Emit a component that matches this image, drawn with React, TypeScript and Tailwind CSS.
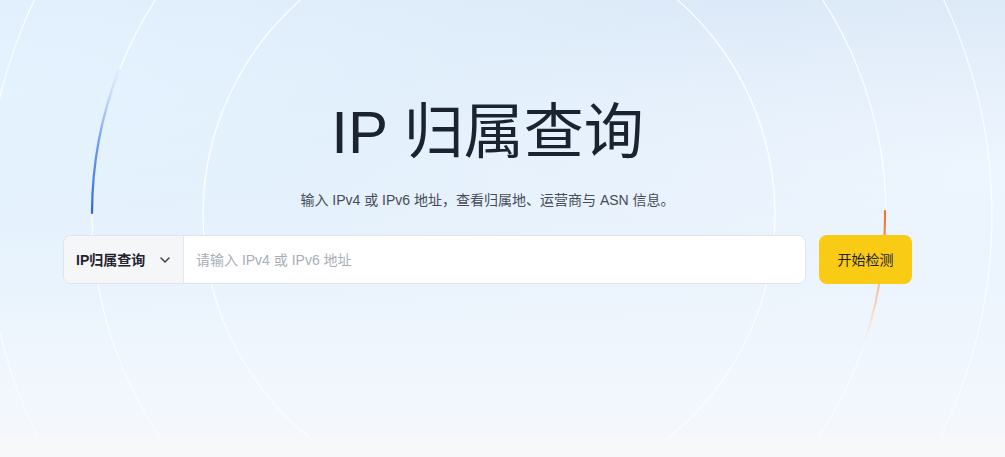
import { ChevronDown } from 'lucide-react';

const font = { fontFamily: '"Liberation Sans", "Noto Sans CJK SC", sans-serif' };

function Rings() {
  return (
    <svg
      className="pointer-events-none absolute inset-0"
      width="1005"
      height="437"
      viewBox="0 0 1005 437"
      fill="none"
    >
      <defs>
        <linearGradient id="blueArc" x1="0" y1="213" x2="0" y2="68" gradientUnits="userSpaceOnUse">
          <stop offset="0" stopColor="#2f64d6" />
          <stop offset="0.5" stopColor="#5b8de6" stopOpacity="0.85" />
          <stop offset="1" stopColor="#a9c4f3" stopOpacity="0.2" />
        </linearGradient>
        <linearGradient id="orangeArc" x1="0" y1="211" x2="0" y2="352" gradientUnits="userSpaceOnUse">
          <stop offset="0" stopColor="#f0732a" />
          <stop offset="0.4" stopColor="#f39a5f" stopOpacity="0.85" />
          <stop offset="1" stopColor="#f8c9a6" stopOpacity="0" />
        </linearGradient>
        <linearGradient id="ringFade" x1="0" y1="0" x2="0" y2="437" gradientUnits="userSpaceOnUse">
          <stop offset="0" stopColor="#ffffff" stopOpacity="0.95" />
          <stop offset="0.6" stopColor="#ffffff" stopOpacity="0.85" />
          <stop offset="1" stopColor="#ffffff" stopOpacity="0.55" />
        </linearGradient>
      </defs>
      <circle cx="489" cy="215" r="286" stroke="url(#ringFade)" strokeWidth="1.3" />
      <circle cx="489" cy="215" r="397" stroke="url(#ringFade)" strokeWidth="1.2" />
      <circle cx="489" cy="215" r="503" stroke="url(#ringFade)" strokeWidth="1.1" />
      {/* blue highlight on the left */}
      <path d="M119 70 A397 397 0 0 0 92 213" stroke="url(#blueArc)" strokeWidth="2.2" strokeLinecap="round" />
      {/* orange highlight on the right */}
      <path d="M885 211 A397 397 0 0 1 862 350" stroke="url(#orangeArc)" strokeWidth="2.2" strokeLinecap="round" />
    </svg>
  );
}

export default function App() {
  return (
    <div className="h-[457px] w-full overflow-hidden bg-[#f7f8fa]" style={font}>
      <section className="relative h-[437px] overflow-hidden bg-[linear-gradient(180deg,#dce9f8_0%,#e4effb_45%,#eef5fd_75%,#f4f8fd_100%)]">
        <div className="absolute inset-0 bg-[radial-gradient(ellipse_at_0%_20%,rgba(228,244,255,0.9),rgba(228,244,255,0)_55%)]" />
        <div className="absolute inset-0 bg-[radial-gradient(ellipse_at_100%_40%,rgba(240,247,255,0.8),rgba(240,247,255,0)_50%)]" />
        <Rings />

        <div className="relative flex flex-col items-center pr-[30px] pt-[97px]">
          <h1 className="text-[60px] font-normal leading-[72px] text-[#1b2230]">IP 归属查询</h1>
          <p className="mt-[21px] text-sm leading-5 text-[#454b57]">
            输入 IPv4 或 IPv6 地址，查看归属地、运营商与 ASN 信息。
          </p>

          <div className="mt-[25px] flex w-[849px] gap-[13px]">
            <div className="flex h-[49px] flex-1 overflow-hidden rounded-lg border border-[#dfe3ea] bg-white">
              <button
                type="button"
                className="flex w-[120px] items-center justify-between border-r border-[#e4e7ec] bg-[#f5f6f7] pl-3 pr-[10px] text-sm font-semibold text-[#1f2430]"
              >
                IP归属查询
                <ChevronDown size={16} strokeWidth={2.2} className="text-[#3a404c]" />
              </button>
              <input
                className="flex-1 bg-white px-3 text-sm text-[#1f2430] outline-none placeholder:text-[#a8adb6]"
                placeholder="请输入 IPv4 或 IPv6 地址"
              />
            </div>
            <button
              type="button"
              className="h-[49px] w-[93px] rounded-lg bg-[#f9cb14] text-sm text-[#1f2430]"
            >
              开始检测
            </button>
          </div>
        </div>
      </section>
    </div>
  );
}
